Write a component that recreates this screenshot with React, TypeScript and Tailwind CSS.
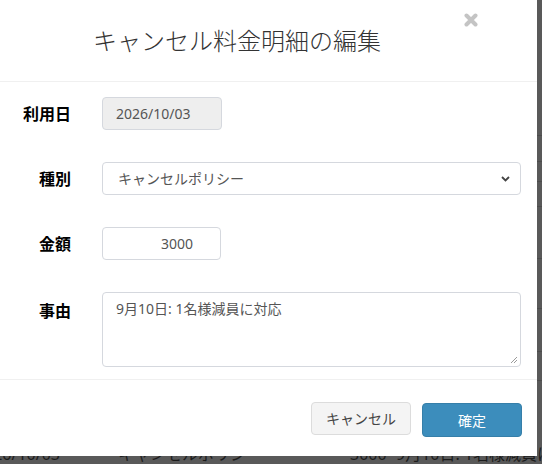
import React from "react";

const font = { fontFamily: '"Noto Sans", "Noto Sans CJK JP", sans-serif' };

export default function App() {
  return (
    <div
      className="relative w-[542px] h-[464px] overflow-hidden bg-[#595959]"
      style={font}
    >
      {/* background page (dimmed) */}
      <div className="flex flex-col">
        <div className="h-[136px] border-b border-[#4c4c4c]" />
        <div className="h-[26px] border-b border-[#4c4c4c]" />
        <div className="h-[20px] border-b border-[#4c4c4c]" />
        <div className="h-[25px] border-b border-[#4c4c4c]" />
        <div className="h-[52px] border-b border-[#4c4c4c]" />
        <div className="h-[50px] border-b border-[#4c4c4c]" />
        <div className="h-[43px] border-b border-[#4c4c4c]" />
        <div className="h-[29px] border-b border-[#4c4c4c]" />
        <div className="h-[58px]" />
        <div className="flex h-[30px] items-center text-[16px] text-[#1c1c1c] whitespace-nowrap">
          <div className="w-[60px] shrink-0 flex justify-end">2026/10/03</div>
          <div className="ml-[58px] w-[232px] shrink-0">キャンセルポリシー</div>
          <div className="w-[46px] shrink-0">3000</div>
          <div className="shrink-0">9月10日: 1名様減員に対応</div>
        </div>
      </div>

      {/* modal */}
      <div className="absolute left-0 top-0 w-[537px] h-[456px] bg-white flex flex-col">
        <div className="relative h-[82px] shrink-0 border-b border-[#f0f0f0] flex items-center pl-[93px]">
          <h4 className="text-[24px] leading-none text-[#333] font-light">
            キャンセル料金明細の編集
          </h4>
          <div className="absolute left-[464px] top-[13px] w-[14px] h-[14px]">
            <svg width="14" height="14" viewBox="0 0 14 14">
              <path
                d="M2.5 2.5 L11.5 11.5 M11.5 2.5 L2.5 11.5"
                stroke="#c4c4c4"
                strokeWidth="4"
                strokeLinecap="round"
              />
            </svg>
          </div>
        </div>

        <div className="flex flex-col gap-[32px] pt-[15px] pr-[16px] h-[298px] border-b border-[#f0f0f0]">
          {/* 利用日 */}
          <div className="flex items-center">
            <div className="w-[71px] text-right text-[16px] font-bold text-black leading-6">
              利用日
            </div>
            <div className="ml-[31px] w-[120px] h-[33px] rounded-[4px] border border-[#d5d8de] bg-[#eeeeee] flex items-center pl-[13px] text-[14px] text-[#555]">
              2026/10/03
            </div>
          </div>
          {/* 種別 */}
          <div className="flex items-center">
            <div className="w-[71px] text-right text-[16px] font-bold text-black leading-6">
              種別
            </div>
            <div className="relative ml-[31px] flex-1 h-[33px] rounded-[4px] border border-[#d5d8de] bg-white flex items-center pl-[15px] text-[14px] text-[#555]">
              キャンセルポリシー
              <svg
                className="absolute right-[10px] top-[13px]"
                width="9"
                height="6"
                viewBox="0 0 9 6"
              >
                <path
                  d="M1 1 L4.5 4.5 L8 1"
                  stroke="#444"
                  strokeWidth="1.8"
                  fill="none"
                />
              </svg>
            </div>
          </div>
          {/* 金額 */}
          <div className="flex items-center">
            <div className="w-[71px] text-right text-[16px] font-bold text-black leading-6">
              金額
            </div>
            <div className="ml-[31px] w-[119px] h-[33px] rounded-[4px] border border-[#d5d8de] bg-white flex items-center justify-end pr-[27px] text-[14px] text-[#555]">
              3000
            </div>
          </div>
          {/* 事由 */}
          <div className="flex items-start">
            <div className="w-[71px] pt-[7px] text-right text-[16px] font-bold text-black leading-6">
              事由
            </div>
            <div className="relative ml-[31px] flex-1 h-[75px] rounded-[4px] border border-[#d5d8de] bg-white pl-[13px] pt-[6px] text-[14px] leading-5 text-[#555]">
              9月10日: 1名様減員に対応
              <svg
                className="absolute right-[2px] bottom-[2px]"
                width="8"
                height="8"
                viewBox="0 0 8 8"
              >
                <path
                  d="M7 1 L1 7 M7 4 L4 7"
                  stroke="#9a9a9a"
                  strokeWidth="1"
                />
              </svg>
            </div>
          </div>
        </div>

        <div className="flex justify-end gap-[11px] pr-[15px] pt-[22px]">
          <div className="w-[100px] h-[33px] rounded-[4px] border border-[#dcdcdc] bg-[#f4f4f4] flex items-center justify-center text-[14px] text-[#444]">
            キャンセル
          </div>
          <div className="mt-[1px] w-[100px] h-[34px] rounded-[4px] border border-[#367fa9] bg-[#3c8dbc] flex items-center justify-center text-[14px] text-white">
            確定
          </div>
        </div>
      </div>
    </div>
  );
}
